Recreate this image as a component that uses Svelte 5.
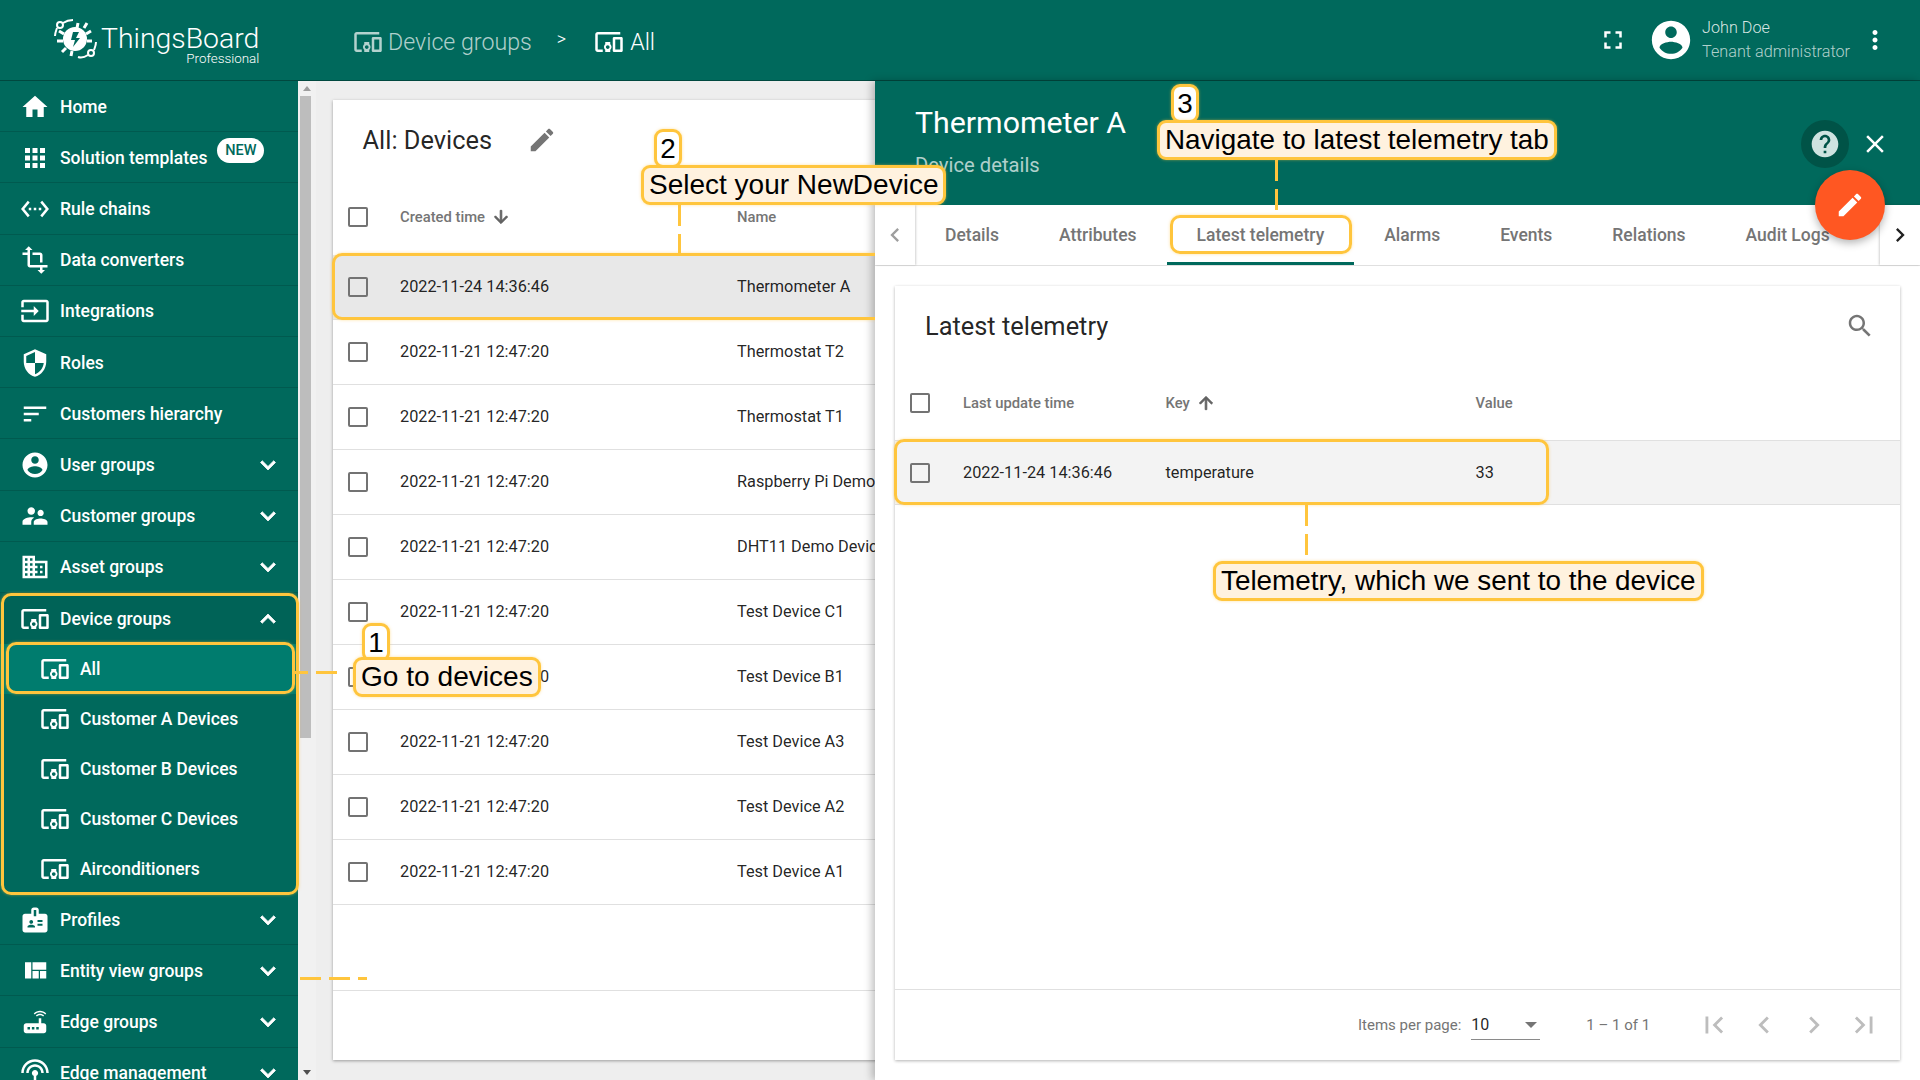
<script>
  const p = {
    home: 'M10 20v-6h4v6h5v-8h3L12 3 2 12h3v8z',
    apps: 'M4 8h4V4H4v4zm6 12h4v-4h-4v4zm-6 0h4v-4H4v4zm0-6h4v-4H4v4zm6 0h4v-4h-4v4zm6-10v4h4V4h-4zm-6 4h4V4h-4v4zm6 6h4v-4h-4v4zm0 6h4v-4h-4v4z',
    rule: 'M7.77 6.76L6.23 5.48.82 12l5.41 6.52 1.54-1.28L3.42 12l4.35-5.24zM7 13h2v-2H7v2zm10-2h-2v2h2v-2zm-6 2h2v-2h-2v2zm6.77-7.52l-1.54 1.28L20.58 12l-4.35 5.24 1.54 1.28L23.18 12l-5.41-6.52z',
    transform: 'M22 18v-2H8V4h2L7 1 4 4h2v2H2v2h4v8c0 1.1.9 2 2 2h8v2h-2l3 3 3-3h-2v-2h4zM10 8h6v6h2V8c0-1.1-.9-2-2-2h-6v2z',
    input: 'M21 3.01H3c-1.1 0-2 .9-2 2V9h2V4.99h18v14.03H3V15H1v4.01c0 1.1.9 1.98 2 1.98h18c1.1 0 2-.88 2-1.98v-14c0-1.11-.9-2-2-2zM11 16l4-4-4-4v3H1v2h10v3z',
    security: 'M12 1L3 5v6c0 5.55 3.84 10.74 9 12 5.16-1.26 9-6.45 9-12V5l-9-4zm0 10.99h7c-.53 4.12-3.28 7.79-7 8.94V12H5V6.3l7-3.11v8.8z',
    sort: 'M3 18h6v-2H3v2zM3 6v2h18V6H3zm0 7h12v-2H3v2z',
    account: 'M12 2C6.48 2 2 6.48 2 12s4.48 10 10 10 10-4.48 10-10S17.52 2 12 2zm0 3c1.66 0 3 1.34 3 3s-1.34 3-3 3-3-1.34-3-3 1.34-3 3-3zm0 14.2c-2.5 0-4.71-1.28-6-3.22.03-1.99 4-3.08 6-3.08 1.99 0 5.97 1.09 6 3.08-1.29 1.94-3.5 3.22-6 3.22z',
    people: 'M16.5 12c1.38 0 2.49-1.12 2.49-2.5S17.88 7 16.5 7C15.12 7 14 8.12 14 9.5s1.12 2.5 2.5 2.5zM9 11c1.66 0 2.99-1.34 2.99-3S10.66 5 9 5C7.34 5 6 6.34 6 8s1.34 3 3 3zm7.5 3c-1.83 0-5.5.92-5.5 2.75V19h11v-2.25c0-1.83-3.67-2.75-5.5-2.75zM9 13c-2.33 0-7 1.17-7 3.5V19h7v-2.25c0-.85.33-2.34 2.37-3.47C10.5 13.1 9.66 13 9 13z',
    domain: 'M12 7V3H2v18h20V7H12zM6 19H4v-2h2v2zm0-4H4v-2h2v2zm0-4H4V9h2v2zm0-4H4V5h2v2zm4 12H8v-2h2v2zm0-4H8v-2h2v2zm0-4H8V9h2v2zm0-4H8V5h2v2zm10 12h-8v-2h2v-2h-2v-2h2v-2h-2V9h8v10zm-2-8h-2v2h2v-2zm0 4h-2v2h2v-2z',
    devices: 'M3 6h18V4H3c-1.1 0-2 .9-2 2v12c0 1.1.9 2 2 2h4v-2H3V6zm10 6H9v1.78c-.61.55-1 1.33-1 2.22s.39 1.67 1 2.22V20h4v-1.78c.61-.55 1-1.34 1-2.22s-.39-1.67-1-2.22V12zm-2 5.5c-.83 0-1.5-.67-1.5-1.5s.67-1.5 1.5-1.5 1.5.67 1.5 1.5-.67 1.5-1.5 1.5zM22 8h-6c-.5 0-1 .5-1 1v10c0 .5.5 1 1 1h6c.5 0 1-.5 1-1V9c0-.5-.5-1-1-1zm-1 10h-4v-8h4v8z',
    badge: 'M20 7h-5V4c0-1.1-.9-2-2-2h-2c-1.1 0-2 .9-2 2v3H4c-1.1 0-2 .9-2 2v11c0 1.1.9 2 2 2h16c1.1 0 2-.9 2-2V9c0-1.1-.9-2-2-2zM9 12c.83 0 1.5.67 1.5 1.5S9.83 15 9 15s-1.5-.67-1.5-1.5S8.17 12 9 12zm3 6H6v-.75c0-1 2-1.5 3-1.5s3 .5 3 1.5V18zm1-9h-2V4h2v5zm5 7.5h-4V15h4v1.5zm0-3h-4V12h4v1.5z',
    quilt: 'M10 18h5v-6h-5v6zm-6 0h5V5H4v13zm12 0h5v-6h-5v6zM10 5v6h11V5H10z',
    router: 'M20.2 5.9l.8-.8C19.6 3.7 17.8 3 16 3s-3.6.7-5 2.1l.8.8C13 4.8 14.5 4.2 16 4.2s3 .6 4.2 1.7zm-.9.8c-.9-.9-2.1-1.4-3.3-1.4s-2.4.5-3.3 1.4l.8.8c.7-.7 1.6-1 2.5-1 .9 0 1.8.3 2.5 1l.8-.8zM19 13h-2V9h-2v4H5c-1.1 0-2 .9-2 2v4c0 1.1.9 2 2 2h14c1.1 0 2-.9 2-2v-4c0-1.1-.9-2-2-2zM8 18H6v-2h2v2zm3.5 0h-2v-2h2v2zm3.5 0h-2v-2h2v2z',
    antenna: 'M12 5c-3.87 0-7 3.13-7 7h2c0-2.76 2.24-5 5-5s5 2.24 5 5h2c0-3.87-3.13-7-7-7zm1 9.29c.88-.39 1.5-1.26 1.5-2.29 0-1.38-1.12-2.5-2.5-2.5S9.5 10.62 9.5 12c0 1.02.62 1.9 1.5 2.29v3.3L7.59 21 9 22.41l3-3 3 3L16.41 21 13 17.59v-3.3zM12 1C5.93 1 1 5.93 1 12h2c0-4.97 4.03-9 9-9s9 4.03 9 9h2c0-6.07-4.93-11-11-11z',
    more: 'M16.59 8.59L12 13.17 7.41 8.59 6 10l6 6 6-6z',
    less: 'M12 8l-6 6 1.41 1.41L12 10.83l4.59 4.58L18 14z',
    edit: 'M3 17.25V21h3.75L17.81 9.94l-3.75-3.75L3 17.25zM20.71 7.04c.39-.39.39-1.02 0-1.41l-2.34-2.34c-.39-.39-1.02-.39-1.41 0l-1.83 1.83 3.75 3.75 1.83-1.83z',
    fullscreen: 'M7 14H5v5h5v-2H7v-3zm-2-4h2V7h3V5H5v5zm12 7h-3v2h5v-5h-2v3zM14 5v2h3v3h2V5h-5z',
    vert: 'M12 8c1.1 0 2-.9 2-2s-.9-2-2-2-2 .9-2 2 .9 2 2 2zm0 2c-1.1 0-2 .9-2 2s.9 2 2 2 2-.9 2-2-.9-2-2-2zm0 6c-1.1 0-2 .9-2 2s.9 2 2 2 2-.9 2-2-.9-2-2-2z',
    help: 'M12 2C6.48 2 2 6.48 2 12s4.48 10 10 10 10-4.48 10-10S17.52 2 12 2zm1 17h-2v-2h2v2zm2.07-7.75l-.9.92C13.45 12.9 13 13.5 13 15h-2v-.5c0-1.1.45-2.1 1.17-2.83l1.24-1.26c.37-.36.59-.86.59-1.41 0-1.1-.9-2-2-2s-2 .9-2 2H8c0-2.21 1.79-4 4-4s4 1.79 4 4c0 .88-.36 1.68-.93 2.25z',
    close: 'M19 6.41L17.59 5 12 10.59 6.41 5 5 6.41 10.59 12 5 17.59 6.41 19 12 13.41 17.59 19 19 17.59 13.41 12z',
    search: 'M15.5 14h-.79l-.28-.27C15.41 12.59 16 11.11 16 9.5 16 5.91 13.09 3 9.5 3S3 5.91 3 9.5 5.91 16 9.5 16c1.61 0 3.09-.59 4.23-1.57l.27.28v.79l5 4.99L20.49 19l-4.99-5zm-6 0C7.01 14 5 11.99 5 9.5S7.01 5 9.5 5 14 7.01 14 9.5 11.99 14 9.5 14z',
    down: 'M20 12l-1.41-1.41L13 16.17V4h-2v12.17l-5.58-5.59L4 12l8 8 8-8z',
    up: 'M4 12l1.41 1.41L11 7.83V20h2V7.83l5.58 5.59L20 12l-8-8-8 8z',
    left: 'M15.41 7.41L14 6l-6 6 6 6 1.41-1.41L10.83 12z',
    right: 'M10 6L8.59 7.41 13.17 12l-4.58 4.59L10 18l6-6z',
    first: 'M18.41 16.59L13.82 12l4.59-4.59L17 6l-6 6 6 6zM6 6h2v12H6z',
    last: 'M5.59 7.41L10.18 12l-4.59 4.59L7 18l6-6-6-6zM16 6h2v12h-2z'
  };

  const topMenu = [
    { icon: 'home', label: 'Home' },
    { icon: 'apps', label: 'Solution templates', badge: 'NEW' },
    { icon: 'rule', label: 'Rule chains' },
    { icon: 'transform', label: 'Data converters' },
    { icon: 'input', label: 'Integrations' },
    { icon: 'security', label: 'Roles' },
    { icon: 'sort', label: 'Customers hierarchy' },
    { icon: 'account', label: 'User groups', arrow: true },
    { icon: 'people', label: 'Customer groups', arrow: true },
    { icon: 'domain', label: 'Asset groups', arrow: true }
  ];
  const subMenu = ['All', 'Customer A Devices', 'Customer B Devices', 'Customer C Devices', 'Airconditioners'];
  const bottomMenu = [
    { icon: 'badge', label: 'Profiles', arrow: true },
    { icon: 'quilt', label: 'Entity view groups', arrow: true },
    { icon: 'router', label: 'Edge groups', arrow: true },
    { icon: 'antenna', label: 'Edge management', arrow: true }
  ];
  const devices = [
    ['2022-11-24 14:36:46', 'Thermometer A'],
    ['2022-11-21 12:47:20', 'Thermostat T2'],
    ['2022-11-21 12:47:20', 'Thermostat T1'],
    ['2022-11-21 12:47:20', 'Raspberry Pi Demo Device'],
    ['2022-11-21 12:47:20', 'DHT11 Demo Device'],
    ['2022-11-21 12:47:20', 'Test Device C1'],
    ['2022-11-21 12:47:20', 'Test Device B1'],
    ['2022-11-21 12:47:20', 'Test Device A3'],
    ['2022-11-21 12:47:20', 'Test Device A2'],
    ['2022-11-21 12:47:20', 'Test Device A1']
  ];
  const tabs = ['Details', 'Attributes', 'Latest telemetry', 'Alarms', 'Events', 'Relations', 'Audit Logs'];
</script>

{#snippet ic(name, cls = '')}
  <svg class="ic {cls}" viewBox="0 0 24 24"><path d={p[name]} /></svg>
{/snippet}

{#snippet menuRow(item)}
  <div class="row">
    {@render ic(item.icon, 'row-ic')}
    <span>{item.label}</span>
    {#if item.badge}<b class="new">{item.badge}</b>{/if}
    {#if item.arrow}{@render ic('more', 'chev')}{/if}
  </div>
{/snippet}

<div class="app">
  <header class="top">
    <div class="logo">
      <svg class="mark" viewBox="0 0 48 48">
        <g fill="none" stroke="#fff" stroke-width="2">
          <circle cx="8" cy="9" r="3" />
          <circle cx="39" cy="37" r="3" />
          <path d="M11 7c3-2 7-3 10-3M5 12c-1 3-2 5-2 8M42 34c1-3 2-5 2-8M36 39c-3 2-7 3-10 2" />
          <path d="M12 18l-5-3M11 25H5M14 32l-4 4M20 35l-1 5M34 18l5-3M35 25h5M32 12l3-5M25 12l1-5" stroke-width="3" />
        </g>
        <circle cx="23" cy="23" r="12" fill="#fff" />
        <path d="M21 16h6l-3 6h4l-7 9 2-7h-4z" fill="#00695c" />
      </svg>
      <div class="word">
        <div class="brand">ThingsBoard</div>
        <div class="edition">Professional</div>
      </div>
    </div>
    <nav class="crumbs">
      <span class="crumb dim">{@render ic('devices', 'crumb-ic')}Device groups</span>
      <span class="sep">&gt;</span>
      <span class="crumb last-crumb">{@render ic('devices', 'crumb-ic')}All</span>
    </nav>
    <div class="user">
      {@render ic('fullscreen', 'full')}
      {@render ic('account', 'avatar')}
      <div class="who">
        <div>John Doe</div>
        <div class="role">Tenant administrator</div>
      </div>
      {@render ic('vert', 'dots')}
    </div>
  </header>

  <div class="body">
    <aside class="side">
      {#each topMenu as item}
        {@render menuRow(item)}
      {/each}
      <div class="group">
        <div class="row open">
          {@render ic('devices', 'row-ic')}
          <span>Device groups</span>
          {@render ic('less', 'chev')}
        </div>
        {#each subMenu as label, i}
          <div class="sub" class:current={i === 0}>
            {@render ic('devices', 'row-ic')}
            <span>{label}</span>
          </div>
        {/each}
      </div>
      {#each bottomMenu as item}
        {@render menuRow(item)}
      {/each}
    </aside>

    <div class="scrollbar">
      <i class="tri up"></i>
      <div class="thumb"></div>
      <i class="tri dn"></i>
    </div>

    <main class="main">
      <section class="card">
        <div class="title">
          <h2>All: Devices</h2>
          {@render ic('edit', 'pencil')}
        </div>
        <div class="thead">
          <i class="box"></i>
          <span class="th">Created time {@render ic('down', 'sort-ic')}</span>
          <span class="th">Name</span>
        </div>
        {#each devices as d, i}
          <div class="tr" class:picked={i === 0}>
            <i class="box"></i>
            <span>{d[0]}</span>
            <span>{d[1]}</span>
          </div>
        {/each}
        <div class="foot"></div>
      </section>
    </main>

    <section class="drawer">
      <div class="d-head">
        <div class="d-title">Thermometer A</div>
        <div class="d-sub">Device details</div>
        <div class="d-actions">
          <span class="help">{@render ic('help', 'help-ic')}</span>
          {@render ic('close', 'close-ic')}
        </div>
        <div class="fab">{@render ic('edit', 'fab-ic')}</div>
      </div>
      <div class="tabs">
        <div class="tab-arrow">{@render ic('left', 'ta dim-ta')}</div>
        <div class="tab-list">
          {#each tabs as t}
            <div class="tab" class:active={t === 'Latest telemetry'}>{t}</div>
          {/each}
        </div>
        <div class="tab-arrow right">{@render ic('right', 'ta')}</div>
      </div>
      <div class="d-body">
        <section class="t-card">
          <div class="t-title">
            <h3>Latest telemetry</h3>
            {@render ic('search', 'search-ic')}
          </div>
          <div class="t-head">
            <i class="box"></i>
            <span class="th">Last update time</span>
            <span class="th">Key {@render ic('up', 'sort-ic')}</span>
            <span class="th">Value</span>
          </div>
          <div class="t-row">
            <i class="box"></i>
            <span>2022-11-24 14:36:46</span>
            <span>temperature</span>
            <span>33</span>
          </div>
          <div class="pager">
            <span class="per">Items per page:</span>
            <span class="select">10<i class="caret"></i></span>
            <span class="range">1 – 1 of 1</span>
            <span class="pages">
              {@render ic('first', 'pg')}
              {@render ic('left', 'pg')}
              {@render ic('right', 'pg')}
              {@render ic('last', 'pg')}
            </span>
          </div>
        </section>
      </div>
    </section>
  </div>

  <!-- tutorial annotations drawn over the screenshot -->
  <div class="notes">
    <div class="ring ring-group"></div>
    <div class="ring ring-all"></div>
    <div class="ring ring-row"></div>
    <div class="ring ring-tab"></div>
    <div class="ring ring-temp"></div>

    <div class="dash-h dh1"></div>
    <div class="dash-h dh2"></div>
    <div class="dash-v dv1"></div>
    <div class="dash-v dv2"></div>
    <div class="dash-v dv3"></div>

    <div class="num n1">1</div>
    <div class="call c1">Go to devices</div>
    <div class="num n2">2</div>
    <div class="call c2">Select your NewDevice</div>
    <div class="num n3">3</div>
    <div class="call c3">Navigate to latest telemetry tab</div>
    <div class="call c4">Telemetry, which we sent to the device</div>
  </div>
</div>

<style>
  :global(body) {
    margin: 0;
    font-family: Roboto, "Liberation Sans", sans-serif;
    overflow: hidden;
  }
  .app {
    position: relative;
    width: 1920px;
    height: 1080px;
    overflow: hidden;
    display: flex;
    flex-direction: column;
    background: #eee;
  }
  .ic {
    width: 24px;
    height: 24px;
    fill: currentColor;
    flex: none;
    display: block;
  }

  /* top bar */
  .top {
    height: 80px;
    flex: none;
    background: #00695c;
    color: #fff;
    display: flex;
    align-items: center;
    border-bottom: 1px solid #00483f;
  }
  .logo {
    width: 298px;
    flex: none;
    display: flex;
    align-items: center;
    padding-left: 52px;
    box-sizing: border-box;
    gap: 1px;
  }
  .mark {
    width: 48px;
    height: 48px;
  }
  .word {
    text-align: right;
  }
  .brand {
    font-size: 28.4px;
    font-weight: 300;
    line-height: 26px;
    margin-top: 12px;
  }
  .edition {
    font-size: 13.4px;
    font-weight: 300;
    line-height: 14px;
  }
  .crumbs {
    display: flex;
    align-items: center;
    margin: 4px 0 0 55px;
    font-size: 23.2px;
    font-weight: 300;
  }
  .crumb {
    display: flex;
    align-items: center;
    gap: 5px;
  }
  .crumb.dim {
    color: rgba(255, 255, 255, 0.7);
  }
  .last-crumb {
    gap: 6px;
  }
  :global(.app) .crumb-ic {
    width: 30px;
    height: 30px;
  }
  .sep {
    margin: -8px 28px 0 25px;
    font-size: 18px;
  }
  .user {
    margin-left: auto;
    display: flex;
    align-items: center;
    padding-right: 30px;
  }
  :global(.app) .full {
    width: 30px;
    height: 30px;
    margin-right: 20px;
  }
  :global(.app) .avatar {
    width: 46px;
    height: 46px;
    margin-right: 8px;
  }
  .who {
    font-size: 16.2px;
    font-weight: 300;
    line-height: 24px;
    color: rgba(255, 255, 255, 0.85);
  }
  .role {
    color: rgba(255, 255, 255, 0.7);
  }
  :global(.app) .dots {
    width: 30px;
    height: 30px;
    margin-left: 10px;
  }

  /* sidebar */
  .body {
    flex: 1;
    position: relative;
    display: flex;
    min-height: 0;
  }
  .side {
    width: 298px;
    flex: none;
    background: #00695c;
    color: #fff;
    overflow: hidden;
    font-size: 17.5px;
    font-weight: 500;
  }
  .row {
    height: 51.2px;
    box-sizing: border-box;
    display: flex;
    align-items: center;
    padding: 1px 15px 0 20px;
    border-bottom: 1px solid rgba(0, 0, 0, 0.14);
  }
  .row.open {
    border-bottom: 0;
    background: rgba(0, 0, 0, 0.05);
  }
  :global(.app) .row-ic {
    width: 30px;
    height: 30px;
    margin-right: 10px;
  }
  :global(.app) .chev {
    width: 30px;
    height: 30px;
    margin-left: auto;
    stroke: currentColor;
    stroke-width: 0.6;
  }
  .new {
    margin: 0 0 15px 10px;
    height: 25px;
    width: 47px;
    border-radius: 13px;
    background: #fff;
    color: #00695c;
    font-size: 14.5px;
    font-weight: 500;
    line-height: 25px;
    text-align: center;
  }
  .sub {
    height: 50px;
    display: flex;
    align-items: center;
    padding-left: 40px;
  }
  .sub.current {
    background: #007c6e;
  }
  .scrollbar {
    width: 18px;
    flex: none;
    background: #f1f1f1;
    position: relative;
    display: flex;
    flex-direction: column;
    align-items: center;
    padding-top: 15px;
    box-sizing: border-box;
    z-index: 0;
  }
  .thumb {
    width: 11px;
    height: 642px;
    background: #bdbdbd;
    margin-left: -3px;
  }
  .tri {
    position: absolute;
    left: 5px;
    width: 0;
    height: 0;
    border-left: 4px solid transparent;
    border-right: 4px solid transparent;
  }
  .tri.up {
    top: 5px;
    border-bottom: 5px solid #9e9e9e;
  }
  .tri.dn {
    bottom: 5px;
    border-top: 5px solid #505050;
  }

  /* devices table */
  .main {
    flex: 1;
    min-width: 0;
    padding: 19px 20px 20px 17px;
    box-sizing: border-box;
    overflow: hidden;
  }
  .card {
    height: 100%;
    background: #fff;
    box-shadow: 0 1px 3px rgba(0, 0, 0, 0.35);
    display: flex;
    flex-direction: column;
    color: rgba(0, 0, 0, 0.87);
    font-size: 16.3px;
  }
  .title {
    height: 80px;
    flex: none;
    display: flex;
    align-items: center;
    padding: 0 0 0 29.5px;
  }
  h2,
  h3 {
    margin: 0;
    font-size: 25.4px;
    font-weight: 400;
  }
  :global(.app) .pencil {
    width: 30px;
    height: 30px;
    color: #757575;
    margin-left: 35px;
  }
  .thead,
  .tr {
    display: grid;
    grid-template-columns: 67px 337px 1fr;
    align-items: center;
    padding-right: 20px;
    white-space: nowrap;
  }
  .thead {
    height: 75px;
    padding-bottom: 2px;
    box-sizing: border-box;
  }
  .tr {
    height: 65px;
    box-sizing: border-box;
    border-bottom: 1px solid #e0e0e0;
    padding-bottom: 1px;
  }
  .tr.picked {
    background: #e8e8e8;
  }
  .box {
    display: block;
    width: 20px;
    height: 20px;
    margin-left: 15px;
    box-sizing: border-box;
    border: 2px solid #737373;
    border-radius: 2px;
  }
  .th {
    color: #757575;
    font-size: 14.8px;
    font-weight: 500;
    display: flex;
    align-items: center;
    gap: 6px;
  }
  :global(.app) .sort-ic {
    width: 20px;
    height: 20px;
    color: #616161;
    stroke: currentColor;
    stroke-width: 1;
  }
  .foot {
    margin-top: auto;
    height: 70px;
    box-sizing: border-box;
    border-top: 1px solid #e0e0e0;
  }

  /* details drawer */
  .drawer {
    position: absolute;
    left: 875px;
    top: 0;
    right: 0;
    bottom: 0;
    background: #fff;
    box-shadow: -3px 0 8px rgba(0, 0, 0, 0.25);
    display: flex;
    flex-direction: column;
    z-index: 1;
  }
  .d-head {
    position: relative;
    height: 124px;
    flex: none;
    box-sizing: border-box;
    background: #00695c;
    color: #fff;
    padding: 21px 0 0 40px;
  }
  .d-title {
    font-size: 30.3px;
    line-height: 42px;
  }
  .d-sub {
    margin-top: 9px;
    font-size: 20.2px;
    line-height: 24px;
    color: rgba(255, 255, 255, 0.7);
  }
  .d-actions {
    position: absolute;
    right: 30px;
    top: 39px;
    display: flex;
    align-items: center;
    gap: 11px;
  }
  .help {
    width: 48px;
    height: 48px;
    border-radius: 50%;
    background: #005347;
    display: flex;
    align-items: center;
    justify-content: center;
  }
  :global(.app) .help-ic {
    width: 32px;
    height: 32px;
    color: #cfe3e0;
  }
  :global(.app) .close-ic {
    width: 30px;
    height: 30px;
  }
  .fab {
    position: absolute;
    left: 940px;
    top: 89px;
    width: 70px;
    height: 70px;
    border-radius: 50%;
    background: #ff5722;
    box-shadow: 0 3px 8px rgba(0, 0, 0, 0.3);
    display: flex;
    align-items: center;
    justify-content: center;
    z-index: 2;
  }
  :global(.app) .fab-ic {
    width: 30px;
    height: 30px;
  }
  .tabs {
    height: 61px;
    flex: none;
    display: flex;
    box-sizing: border-box;
    border-bottom: 1px solid #e0e0e0;
  }
  .tab-arrow {
    width: 40px;
    flex: none;
    display: flex;
    align-items: center;
    justify-content: center;
    box-shadow: 1px 0 2px rgba(0, 0, 0, 0.18);
    z-index: 1;
    background: #fff;
  }
  .tab-arrow.right {
    box-shadow: -1px 0 2px rgba(0, 0, 0, 0.18);
  }
  :global(.app) .ta {
    width: 28px;
    height: 28px;
    color: #212121;
  }
  :global(.app) .dim-ta {
    color: #9e9e9e;
  }
  .tab-list {
    flex: 1;
    display: flex;
    overflow: hidden;
    min-width: 0;
  }
  .tab {
    flex: none;
    padding: 0 30px;
    line-height: 60px;
    font-size: 17.5px;
    font-weight: 500;
    color: #757575;
    box-sizing: border-box;
    height: 60px;
  }
  .tab.active {
    border-bottom: 3px solid #00695c;
  }
  .d-body {
    flex: 1;
    min-height: 0;
    padding: 20px;
    background: #fff;
  }
  .t-card {
    height: 100%;
    box-shadow: 0 1px 3px rgba(0, 0, 0, 0.3);
    display: flex;
    flex-direction: column;
    color: rgba(0, 0, 0, 0.87);
    font-size: 16.3px;
  }
  .t-title {
    height: 80px;
    flex: none;
    display: flex;
    align-items: center;
    justify-content: space-between;
    padding: 0 25px 0 30px;
  }
  :global(.app) .search-ic {
    width: 30px;
    height: 30px;
    color: #757575;
  }
  .t-head,
  .t-row {
    display: grid;
    grid-template-columns: 68px 202.5px 310px 1fr;
    align-items: center;
  }
  .t-head {
    height: 74px;
  }
  .t-row {
    height: 65px;
    box-sizing: border-box;
    background: #f3f3f3;
    border-top: 1px solid #e0e0e0;
    border-bottom: 1px solid #e0e0e0;
  }
  .pager {
    margin-top: auto;
    height: 71px;
    box-sizing: border-box;
    border-top: 1px solid #e0e0e0;
    display: flex;
    align-items: center;
    padding-left: 463px;
    color: #757575;
    font-size: 15px;
  }
  .select {
    width: 69px;
    margin-left: 10px;
    height: 30px;
    line-height: 28px;
    box-sizing: border-box;
    border-bottom: 1px solid #8a8a8a;
    color: rgba(0, 0, 0, 0.87);
    font-size: 16px;
    display: flex;
    align-items: center;
    justify-content: space-between;
    padding-right: 3px;
  }
  .caret {
    width: 0;
    height: 0;
    border-left: 6px solid transparent;
    border-right: 6px solid transparent;
    border-top: 6px solid #757575;
  }
  .range {
    margin-left: 46px;
  }
  .pages {
    display: flex;
    margin-left: 47px;
    gap: 16px;
  }
  :global(.app) .pg {
    width: 34px;
    height: 34px;
    color: #bdbdbd;
  }

  /* annotations */
  .notes {
    position: absolute;
    inset: 0;
    z-index: 5;
    pointer-events: none;
  }
  .ring {
    position: absolute;
    box-sizing: border-box;
    border: 3px solid #ffc53d;
    border-radius: 10px;
    box-shadow: 0 0 3px rgba(255, 197, 61, 0.5);
  }
  .ring-group {
    left: 1px;
    top: 593px;
    width: 298px;
    height: 302px;
  }
  .ring-all {
    left: 6px;
    top: 642px;
    width: 289px;
    height: 52px;
  }
  .ring-row {
    left: 332px;
    top: 253px;
    width: 553px;
    height: 67px;
    clip-path: inset(-5px 10px -5px -5px);
  }
  .ring-tab {
    left: 1170px;
    top: 215px;
    width: 182px;
    height: 39px;
  }
  .ring-temp {
    left: 894px;
    top: 439px;
    width: 655px;
    height: 66px;
  }
  .dash-h,
  .dash-v {
    position: absolute;
  }
  .dash-h {
    height: 3px;
    background: repeating-linear-gradient(90deg, #ffc53d 0 21px, transparent 21px 29px);
  }
  .dh1 {
    left: 295px;
    top: 671px;
    width: 42px;
    background: linear-gradient(90deg, #ffc53d 0 13px, transparent 13px 21px, #ffc53d 21px);
  }
  .dh2 {
    left: 300px;
    top: 977px;
    width: 67px;
  }
  .dash-v {
    width: 3px;
    background: repeating-linear-gradient(180deg, #ffc53d 0 21px, transparent 21px 29px);
  }
  .dv1 {
    left: 678px;
    top: 205px;
    height: 48px;
  }
  .dv2 {
    left: 1275px;
    top: 160px;
    height: 55px;
  }
  .dv3 {
    left: 1305px;
    top: 505px;
    height: 56px;
  }
  .call,
  .num {
    position: absolute;
    box-sizing: border-box;
    border: 3px solid #ffc53d;
    border-radius: 9px;
    box-shadow: 0 0 3px rgba(255, 197, 61, 0.5);
    font-family: "Liberation Sans", Arial, sans-serif;
    font-size: 27.85px;
    color: #000;
    white-space: nowrap;
    text-align: center;
  }
  .call {
    height: 40px;
    line-height: 34px;
    background: #fff2df;
    padding: 0 5px;
  }
  .num {
    width: 28px;
    height: 39px;
    line-height: 34px;
    background: #fff;
  }
  .n1 {
    left: 362px;
    top: 623px;
  }
  .c1 {
    left: 353px;
    top: 657px;
    font-size: 28.1px;
  }
  .n2 {
    left: 654px;
    top: 129px;
  }
  .c2 {
    left: 641px;
    top: 165px;
    font-size: 28px;
  }
  .n3 {
    left: 1171px;
    top: 84px;
  }
  .c3 {
    left: 1157px;
    top: 120px;
  }
  .c4 {
    left: 1213px;
    top: 561px;
  }
</style>
